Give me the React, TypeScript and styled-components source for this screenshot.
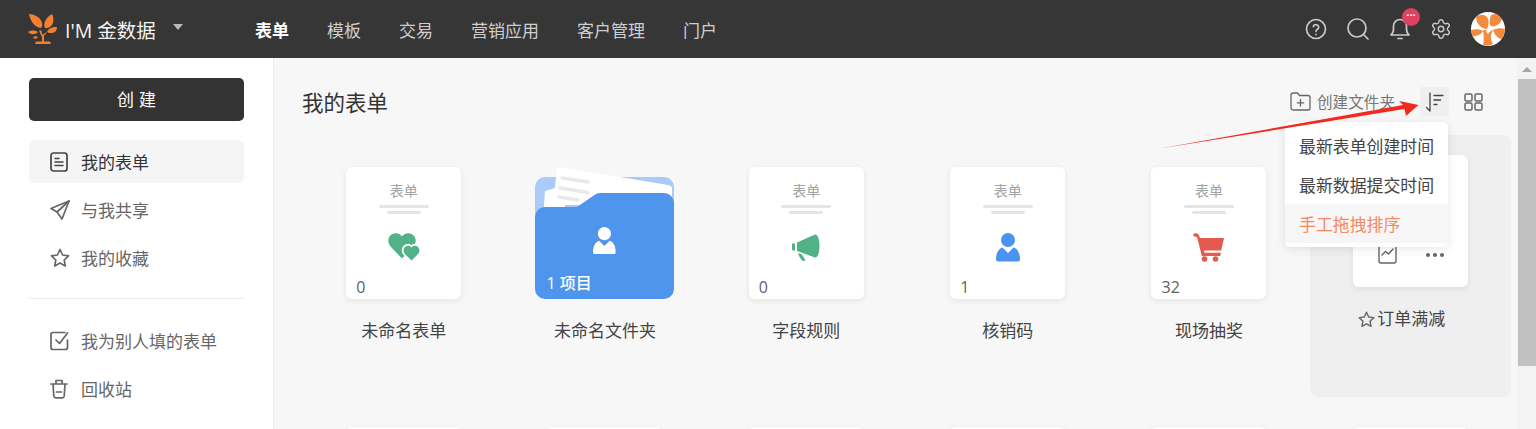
import React from 'react';
import styled, { createGlobalStyle } from 'styled-components';
import { Settings } from 'lucide-react';

const FONT = '"Open Sans", "Noto Sans CJK SC", sans-serif';

const GlobalStyle = createGlobalStyle`
  html, body {
    margin: 0;
    padding: 0;
    height: 100%;
    overflow: hidden;
    font-family: ${FONT};
    color: #333;
  }
  * { box-sizing: border-box; }
`;

const Page = styled.div`
  position: relative;
  display: flex;
  flex-direction: column;
  height: 100vh;
  overflow: hidden;
`;

const Header = styled.header`
  display: flex;
  align-items: center;
  flex: 0 0 58px;
  padding-left: 28px;
  background-color: #363636;
  color: #e8e8e8;
`;
const Logo = styled.div`
  display: flex;
  align-items: center;
  width: 227px;
  font-size: 19.5px;
  color: #f4f4f4;
`;
const LogoText = styled.span`
  margin-left: 7px;
`;
const Caret = styled.span`
  width: 0;
  height: 0;
  margin: -5px 0 0 17px;
  border-left: 5px solid transparent;
  border-right: 5px solid transparent;
  border-top: 6px solid #b9b9b9;
`;
const Nav = styled.nav`
  display: flex;
  gap: 38px;
  flex: 1;
`;
const NavItem = styled.a<{active?:boolean}>`
  font-size: 17px;
  font-weight: ${props => props.active ? '700' : '400'};
  color: ${props => props.active ? '#fff' : '#cfcfcf'};
`;
const HeaderTools = styled.div`
  display: flex;
  align-items: center;
  padding-right: 31px;
`;
const ToolIcon = styled.span<{gap:number}>`
  position: relative;
  display: flex;
  margin-left: ${props => props.gap}px;
  color: #c9c9c9;
`;
const Badge = styled.span`
  position: absolute;
  top: -9px;
  left: 12px;
  width: 18px;
  height: 18px;
  border-radius: 50%;
  background-color: #df4160;
  color: #fff;
  font-size: 11px;
  font-weight: 700;
  line-height: 14px;
  text-align: center;
`;
const Avatar = styled.div`
  display: flex;
  width: 34px;
  height: 34px;
  margin-left: 19px;
  border-radius: 50%;
  overflow: hidden;
  background-color: #fff;
`;

const Body = styled.div`
  display: flex;
  flex: 1;
  min-height: 0;
`;

const Sidebar = styled.aside`
  flex: 0 0 274px;
  padding: 20px 29px 0;
  background-color: #fff;
  border-right: 1px solid #ececec;
`;
const CreateButton = styled.button`
  display: block;
  width: 215px;
  height: 43px;
  margin-bottom: 19px;
  padding: 0 0 2px 5px;
  border: 0;
  border-radius: 5px;
  background-color: #333;
  color: #fff;
  font-family: ${FONT};
  font-size: 17px;
  letter-spacing: 5px;
`;
const MenuList = styled.div`
  display: flex;
  flex-direction: column;
  gap: 5px;
`;
const MenuItem = styled.div<{active?:boolean}>`
  display: flex;
  align-items: center;
  height: 43px;
  padding-left: 21px;
  border-radius: 6px;
  font-size: 17px;
  color: ${props => props.active ? '#333' : '#666'};
  background-color: ${props => props.active ? '#f5f5f5' : 'transparent'};
`;
const MenuIcon = styled.span`
  display: flex;
  flex: 0 0 31px;
`;
const Divider = styled.div`
  height: 1px;
  margin: 19px 0 20px;
  background-color: #ebebeb;
`;

const Main = styled.main`
  flex: 1;
  min-width: 0;
  padding: 0 6px 0 29px;
  background-color: #f7f7f7;
`;
const TitleBar = styled.div`
  display: flex;
  align-items: center;
  height: 77px;
  padding-top: 10px;
`;
const Title = styled.h1`
  flex: 1;
  margin: 0 0 0 -1px;
  font-size: 21.5px;
  font-weight: 400;
  color: #333;
`;
const NewFolder = styled.div`
  display: flex;
  align-items: center;
  gap: 6px;
  font-size: 15.6px;
  color: #777;
`;
const SortButton = styled.div`
  display: flex;
  align-items: center;
  justify-content: center;
  width: 29px;
  height: 29px;
  margin-left: 25px;
  background-color: #efefef;
  color: #444;
`;
const GridButton = styled.div`
  display: flex;
  margin: 0 28px 0 15px;
  color: #666;
`;

const FormGrid = styled.div`
  display: grid;
  grid-template-columns: repeat(6, 1fr);
  grid-auto-rows: 260px;
`;
const Cell = styled.div<{hovered?:boolean}>`
  display: flex;
  flex-direction: column;
  align-items: center;
  height: 262px;
  padding-top: ${props => props.hovered ? '20px' : '32px'};
  border-radius: 8px;
  background-color: ${props => props.hovered ? '#efefef' : 'transparent'};
`;
const Card = styled.div`
  position: relative;
  flex: 0 0 132px;
  display: flex;
  flex-direction: column;
  align-items: center;
  width: 115px;
  padding-top: 16px;
  border-radius: 6px;
  background-color: #fff;
  box-shadow: 0 2px 6px rgba(0, 0, 0, 0.08);
`;
const CardTag = styled.div`
  font-size: 14px;
  line-height: 16px;
  color: #a3a3a3;
`;
const CardLine = styled.div<{long?:boolean}>`
  width: ${props => props.long ? '50px' : '34px'};
  height: 3px;
  margin-top: ${props => props.long ? '6px' : '3px'};
  border-radius: 2px;
  background-color: #e4e4e4;
`;
const CardIcon = styled.div`
  display: flex;
  justify-content: center;
  align-items: center;
  height: 30px;
  margin-top: 18px;
`;
const CardCount = styled.div`
  position: absolute;
  left: 10px;
  bottom: 1px;
  font-size: 16px;
  font-weight: 500;
  color: #5f5f5f;
`;
const CardActions = styled.div`
  position: absolute;
  left: 25px;
  right: 24px;
  bottom: 23px;
  display: flex;
  justify-content: space-between;
  align-items: flex-end;
  color: #666;
`;
const DotsWrap = styled.span`
  display: flex;
  margin-bottom: 7px;
`;
const Folder = styled.div`
  position: relative;
  width: 139px;
  height: 132px;
  flex: 0 0 132px;
  & > svg {
    display: block;
  }
`;
const FolderCount = styled.div`
  position: absolute;
  left: 11px;
  bottom: 5px;
  font-size: 16px;
  font-weight: 500;
  color: #fff;
`;
const CellLabel = styled.div`
  margin-top: 20px;
  font-size: 17px;
  line-height: 24px;
  color: #444;
`;
const StarLabel = styled(CellLabel)`
  display: flex;
  align-items: center;
  gap: 2px;
  margin-right: 17px;
`;

const Scrollbar = styled.div`
  display: flex;
  flex-direction: column;
  align-items: center;
  flex: 0 0 19px;
  background-color: #f3f3f3;
`;
const ScrollUp = styled.span`
  width: 0;
  height: 0;
  margin: 9px 0 7px;
  border-left: 5px solid transparent;
  border-right: 5px solid transparent;
  border-bottom: 5px solid #a8a8a8;
`;
const ScrollThumb = styled.div`
  align-self: flex-end;
  width: 18px;
  height: 287px;
  background-color: #c1c1c1;
`;

const SortMenu = styled.div`
  position: absolute;
  left: 1285px;
  top: 122px;
  width: 163px;
  height: 125px;
  padding-top: 4px;
  border-radius: 5px;
  background-color: #fff;
  box-shadow: 0 2px 10px rgba(0, 0, 0, 0.1);
`;
const SortOption = styled.div<{selected?:boolean}>`
  height: 39px;
  padding-left: 14px;
  font-size: 16.9px;
  line-height: 42px;
  color: ${props => props.selected ? '#f78a63' : '#444'};
  background-color: ${props => props.selected ? '#f6f6f6' : 'transparent'};
`;
const Arrow = styled.svg`
  position: absolute;
  left: 1150px;
  top: 85px;
`;

const ICON = { fill: 'none', stroke: 'currentColor', strokeWidth: 1.7, strokeLinecap: 'round', strokeLinejoin: 'round' } as const;

const TreeLogo = () => <svg width="30" height="30" viewBox="0 0 30 30" fill="#f47f2f">
  <path d="M1 0C5 0 13 3 14 9c.4 2 0 4-1 5C7 13 3 9 1 0Z"/>
  <path d="M24 0c2 4 2 9-1 12-2 2-4 2-6 2-2-4 0-10 7-14Z"/>
  <path d="M0 18c3-2 7-2 10 0-3 3-7 3-10 0Z"/>
  <path d="M29 13c0 3-2 6-5 6-2 0-4 0-5-1 1-3 4-5 10-5Z"/>
  <path d="M5 24c1-2 3-2 5-1-1 2-3 2-5 1Z"/>
  <path d="M11 16.500h2.500c.3 2 .7 3.500 1.500 4.500 1-1.500 2.500-2.500 4-3l-3 4v5.500h6l1 2.500H7l1-2.500h6v-4.500c-1-2-2-4-3-6.500Z"/>
</svg>;

const AvatarTree = () => <svg width="34" height="34" viewBox="0 0 34 34" fill="#f58a3c">
  <path d="M5 5c3-3 8-3 11 0 2 3 2 8 0 12-6 0-11-6-11-12Z"/>
  <path d="M20 3c4-2 9-1 11 1 1 4-3 9-7 10-2 1-4 0-5-1-1-3 0-7 1-10Z"/>
  <path d="M0 18c4-1 9-1 12 1-1 3-7 6-11 5-1-2-1-4-1-6Z"/>
  <path d="M22 18c4-2 9-2 12-1 0 4-1 8-3 10-4 0-8-5-9-9Z"/>
  <path d="M12 18h3c.5 2 1 3 2 4 1-1.500 2-3 5-4l-2 5c-.5 3 0 6 2 9-3 2-7 2-10 1 1-4 1-8 0-15Z"/>
</svg>;

const FormIcon = () => <svg width="18" height="20" viewBox="0 0 18 20" {...ICON}>
  <rect x="1" y="1" width="16" height="18" rx="2.5" stroke="#444"/>
  <path d="M5 6.500h4M5 10h8M5 13.500h8" stroke="#444" strokeWidth="1.500"/>
</svg>;
const PlaneIcon = () => <svg width="20" height="20" viewBox="0 0 20 20" {...ICON} stroke="#666">
  <path d="M19 1 1 8.500l6 3.500 5 7L19 1Z"/><path d="M7 12 19 1"/>
</svg>;
const StarIcon = ({size = 20}:{size?:number}) => <svg width={size} height={size} viewBox="0 0 20 20" {...ICON} stroke="#666">
  <path d="m10 1.500 2.600 5.500 6 .8-4.400 4.200 1.100 6L10 15.100 4.700 18l1.100-6L1.400 7.800l6-.8L10 1.500Z"/>
</svg>;
const CheckIcon = () => <svg width="19" height="20" viewBox="0 0 19 20" {...ICON} stroke="#666">
  <path d="M17.500 9v7.500a2 2 0 0 1-2 2H3a2 2 0 0 1-2-2V3.500a2 2 0 0 1 2-2h12"/><path d="m6 9 3.500 3.500L17.500 2"/>
</svg>;
const TrashIcon = () => <svg width="18" height="20" viewBox="0 0 18 20" {...ICON} stroke="#666">
  <path d="M1 5h16M6 5V1.500h6V5M3 5l.8 12a2 2 0 0 0 2 1.800h6.400a2 2 0 0 0 2-1.800L15 5M6.500 13h5"/>
</svg>;

const HeartsIcon = () => <svg width="32" height="28" viewBox="0 0 32 28">
  <path d="M14 25.500 3 14C-1 10-.5 3.500 4 1.200 7.500-.5 11.500.2 14 3.500 16.500.2 20.500-.5 24 1.200c4.500 2.300 5 8.800 1 12.800L14 25.500Z" fill="#50b286"/>
  <path d="M23.500 27.500 17 21c-2.500-2.500-1.500-7 1.500-8 2-.8 3.800-.2 5 1.500 1.200-1.700 3-2.300 5-1.500 3 1 4 5.500 1.500 8l-6.500 6.500Z" fill="#50b286" stroke="#fff" strokeWidth="3.5" paintOrder="stroke"/>
</svg>;
const HornIcon = () => <svg width="28" height="27" viewBox="0 0 28 27" fill="#50b286">
  <path d="M0 9.500h3v7H1a1 1 0 0 1-1-1v-6Z"/>
  <path d="M5 8.500 23 .5c2.500-1 4.500 5 4.500 11.500 0 7-2 12-4.500 11.500L5 17V8.500Z"/>
  <path d="m6 19 4 1.500 3.500 6-2.500.5c-2-1-4-4.500-5-8Z"/>
</svg>;
const PersonIcon = ({color}:{color:string}) => <svg width="24" height="29" viewBox="0 0 24 29" fill={color}>
  <circle cx="12" cy="7" r="7"/>
  <path d="M6.500 14.500 12 20l5.500-5.500c4 1 6.500 6 6.500 12 0 1-1 2-2 2H2c-1 0-2-1-2-2 0-6 2.500-11 6.500-12Z"/>
</svg>;
const CartIcon = () => <svg width="32" height="29" viewBox="0 0 32 29" fill="#e55a4f">
  <path d="M1 .5c2-.8 4 0 4.800 1.400L7 5h24l-2.800 12.500H11l.5 2.200h16.500l-.7 3.300H8.800L4 4 1.500 3.500C0 3-.2 1 1 .5Z"/>
  <circle cx="11.500" cy="26" r="2.800"/><circle cx="22.500" cy="26" r="2.800"/>
</svg>;
const ChartIcon = () => <svg width="19" height="21" viewBox="0 0 19 21" {...ICON} strokeWidth={1.4}>
  <path d="M1 3v15a2 2 0 0 0 2 2h13a2 2 0 0 0 2-2V3M4 12l3.500-3.500 3 2.500L15 6"/>
</svg>;
const DotsIcon = () => <svg width="18" height="4" viewBox="0 0 18 4" fill="currentColor">
  <circle cx="2" cy="2" r="2"/><circle cx="9" cy="2" r="2"/><circle cx="16" cy="2" r="2"/>
</svg>;

const FolderArt = () => <svg width="139" height="132" viewBox="0 0 139 132">
  <path d="M0 20a10 10 0 0 1 10-10h119a10 10 0 0 1 10 10v40H0Z" fill="#a9cbf8"/>
  <path d="M10 24 30 18v34H8Z" fill="#fff"/>
  <path d="M22 1a3 3 0 0 1 3-1l108 18c3 .5 4 2 4 4v16H18Z" fill="#fff"/>
  <path d="M27 11 53 15M25 21 53 25.500M24 30l19 3" stroke="#e9e9e9" strokeWidth="3.5" strokeLinecap="round"/>
  <path d="M0 50a10 10 0 0 1 10-10h32l16-11c2-1.500 4-3 7-3h64a10 10 0 0 1 10 10v86a10 10 0 0 1-10 10H10a10 10 0 0 1-10-10Z" fill="#4f95ee"/>
  <g transform="translate(58 60) scale(.95)"><PersonIcon color="#fff"/></g>
</svg>;

const Thumb = ({ icon }:{ icon:React.ReactNode }) => <React.Fragment>
  <CardTag>表单</CardTag>
  <CardLine long/>
  <CardLine/>
  <CardIcon>{ icon }</CardIcon>
</React.Fragment>;

const forms = [
  { name: '未命名表单', count: 0, icon: <HeartsIcon/> },
  { name: '字段规则', count: 0, icon: <HornIcon/> },
  { name: '核销码', count: 1, icon: <PersonIcon color="#4a93f0"/> },
  { name: '现场抽奖', count: 32, icon: <CartIcon/> },
];

const FormCell = ({ name, count, icon }:{ name:string, count:number, icon:React.ReactNode }) => <Cell>
  <Card>
    <Thumb icon={icon}/>
    <CardCount>{ count }</CardCount>
  </Card>
  <CellLabel>{ name }</CellLabel>
</Cell>;

export default function App() {
  return <Page>
    <GlobalStyle/>
    <Header>
      <Logo>
        <TreeLogo/>
        <LogoText>I'M 金数据</LogoText>
        <Caret/>
      </Logo>
      <Nav>
        <NavItem active>表单</NavItem>
        <NavItem>模板</NavItem>
        <NavItem>交易</NavItem>
        <NavItem>营销应用</NavItem>
        <NavItem>客户管理</NavItem>
        <NavItem>门户</NavItem>
      </Nav>
      <HeaderTools>
        <ToolIcon gap={0}>
          <svg width="22" height="22" viewBox="0 0 22 22" {...ICON}>
            <circle cx="11" cy="11" r="9.5"/><path d="M8.300 8.500a2.800 2.800 0 0 1 5.400.8c0 1.900-2.700 2.300-2.700 4"/><path d="M11 16.300v.1"/>
          </svg>
        </ToolIcon>
        <ToolIcon gap={20}>
          <svg width="22" height="22" viewBox="0 0 22 22" {...ICON}>
            <circle cx="10" cy="10" r="9"/><path d="m17 17 4 4"/>
          </svg>
        </ToolIcon>
        <ToolIcon gap={21}>
          <svg width="20" height="24" viewBox="0 0 20 24" {...ICON}>
            <path d="M1 18h18c-1.800-1.500-2.500-3-2.500-6V9a6.500 6.500 0 0 0-13 0v3c0 3-.7 4.500-2.500 6ZM8 21.500h4"/>
          </svg>
          <Badge>···</Badge>
        </ToolIcon>
        <ToolIcon gap={20}>
          <Settings size={22} strokeWidth={1.6}/>
        </ToolIcon>
        <Avatar><AvatarTree/></Avatar>
      </HeaderTools>
    </Header>
    <Body>
      <Sidebar>
        <CreateButton>创建</CreateButton>
        <MenuList>
          <MenuItem active><MenuIcon><FormIcon/></MenuIcon>我的表单</MenuItem>
          <MenuItem><MenuIcon><PlaneIcon/></MenuIcon>与我共享</MenuItem>
          <MenuItem><MenuIcon><StarIcon/></MenuIcon>我的收藏</MenuItem>
        </MenuList>
        <Divider/>
        <MenuList>
          <MenuItem><MenuIcon><CheckIcon/></MenuIcon>我为别人填的表单</MenuItem>
          <MenuItem><MenuIcon><TrashIcon/></MenuIcon>回收站</MenuItem>
        </MenuList>
      </Sidebar>
      <Main>
        <TitleBar>
          <Title>我的表单</Title>
          <NewFolder>
            <svg width="21" height="19" viewBox="0 0 21 19" {...ICON} stroke="#666" strokeWidth={1.3}>
              <path d="M1 3a2 2 0 0 1 2-2h4.500l2 2.500H18a2 2 0 0 1 2 2V16a2 2 0 0 1-2 2H3a2 2 0 0 1-2-2ZM10.500 7.500v6.500M7.300 10.800h6.400"/>
            </svg>
            创建文件夹
          </NewFolder>
          <SortButton>
            <svg width="19" height="20" viewBox="0 0 19 20" {...ICON} strokeWidth={1.3}>
              <path d="M5 1v18L1.500 15.500M9 3.500h9M9 8h6.500M9 12.500h3"/>
            </svg>
          </SortButton>
          <GridButton>
            <svg width="19" height="18" viewBox="0 0 19 18" {...ICON} strokeWidth={1.5}>
              <rect x="1" y="1" width="7" height="7" rx="1.5"/><rect x="11" y="1" width="7" height="7" rx="1.5"/>
              <rect x="1" y="10" width="7" height="7" rx="1.5"/><rect x="11" y="10" width="7" height="7" rx="1.5"/>
            </svg>
          </GridButton>
        </TitleBar>
        <FormGrid>
          <FormCell {...forms[0]}/>
          <Cell>
            <Folder>
              <FolderArt/>
              <FolderCount>1 项目</FolderCount>
            </Folder>
            <CellLabel>未命名文件夹</CellLabel>
          </Cell>
          <FormCell {...forms[1]}/>
          <FormCell {...forms[2]}/>
          <FormCell {...forms[3]}/>
          <Cell hovered>
            <Card>
              <CardActions><ChartIcon/><DotsWrap><DotsIcon/></DotsWrap></CardActions>
            </Card>
            <StarLabel><StarIcon size={17}/>订单满减</StarLabel>
          </Cell>
          { [0, 1, 2, 3, 4, 5].map((i) => <Cell key={i}><Card/></Cell>) }
        </FormGrid>
      </Main>
      <Scrollbar>
        <ScrollUp/>
        <ScrollThumb/>
      </Scrollbar>
    </Body>
    <SortMenu>
      <SortOption>最新表单创建时间</SortOption>
      <SortOption>最新数据提交时间</SortOption>
      <SortOption selected>手工拖拽排序</SortOption>
    </SortMenu>
    <Arrow width="280" height="70" viewBox="0 0 280 70" fill="#f5281f">
      <path d="M10 63.500 253 20 249 16 268.500 20 256 31 254.500 24Z"/>
    </Arrow>
  </Page>;
}
